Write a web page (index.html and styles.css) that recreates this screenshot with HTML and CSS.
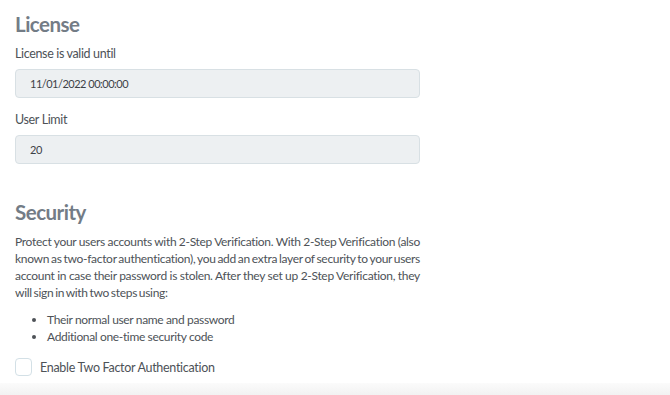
FILE: index.html
```html
<!DOCTYPE html>
<html lang="en">

<head>
    <meta charset="UTF-8">
    <meta name="viewport" content="width=device-width, initial-scale=1.0">
    <title>Settings</title>
    <link rel="stylesheet" href="styles.css">
</head>

<body>
    <div class="page">
        <!-- 许可证 -->
        <section class="section">
            <h2 class="section-title">License</h2>
            <div class="field">
                <label class="field-label">License is valid until</label>
                <input class="field-input" type="text" value="11/01/2022 00:00:00" readonly>
            </div>
            <div class="field">
                <label class="field-label">User Limit</label>
                <input class="field-input" type="text" value="20" readonly>
            </div>
        </section>

        <!-- 安全 -->
        <section class="section security">
            <h2 class="section-title">Security</h2>
            <p class="desc">Protect your users accounts with 2-Step Verification. With 2-Step Verification (also known as two-factor authentication), you add an extra layer of security to your users account in case their password is stolen. After they set up 2-Step Verification, they will sign in with two steps using:</p>
            <ul class="steps">
                <li>Their normal user name and password</li>
                <li>Additional one-time security code</li>
            </ul>
            <label class="check">
                <input type="checkbox">
                <span class="check-box"></span>
                <span>Enable Two Factor Authentication</span>
            </label>
        </section>
    </div>
    <div class="bottom-bar"></div>
</body>

</html>
```

FILE: styles.css
```css
* {
    box-sizing: border-box;
}

body {
    margin: 0;
    font-family: Lato, "Open Sans", sans-serif;
    color: #4d5257;
    background: #fff;
    height: 395px;
    display: flex;
    flex-direction: column;
    overflow: hidden;
}

.page {
    padding: 12px 15px 0 15px;
    width: 435px;
    flex: 1;
}

.section-title {
    margin: 0 0 10px;
    font-size: 20.5px;
    font-weight: 700;
    letter-spacing: -0.5px;
    color: #737c86;
}

.field {
    margin-bottom: 14px;
}

.field-label {
    display: block;
    font-size: 12.5px;
    letter-spacing: -0.35px;
    margin-bottom: 8px;
}

.field-input {
    display: block;
    width: 405px;
    height: 29px;
    padding: 0 14px;
    border: 1px solid #d8e0e4;
    border-radius: 4px;
    background: #edf0f2;
    font-family: inherit;
    font-size: 11px;
    letter-spacing: -0.5px;
    color: #3d4247;
    outline: none;
}

/* 安全部分 */
.security {
    margin-top: 36px;
}

.security .section-title {
    margin-bottom: 9px;
}

.desc {
    margin: 0;
    font-size: 12px;
    line-height: 17px;
    letter-spacing: -0.3px;
    word-spacing: -1px;
    text-align: justify;
    width: 405px;
}

.steps {
    margin: 10px 0 13px;
    padding-left: 32px;
    font-size: 12px;
    line-height: 17px;
    letter-spacing: -0.35px;
}

.check {
    display: flex;
    align-items: center;
    gap: 8px;
    font-size: 12.5px;
    letter-spacing: -0.3px;
    cursor: pointer;
}

.check input {
    display: none;
}

.check-box {
    width: 17px;
    height: 18px;
    border: 1.5px solid #d3e0e6;
    border-radius: 4px;
    background: #fff;
}

.bottom-bar {
    height: 12px;
    background: linear-gradient(#fbfbfb, #f2f2f2);
}
```
